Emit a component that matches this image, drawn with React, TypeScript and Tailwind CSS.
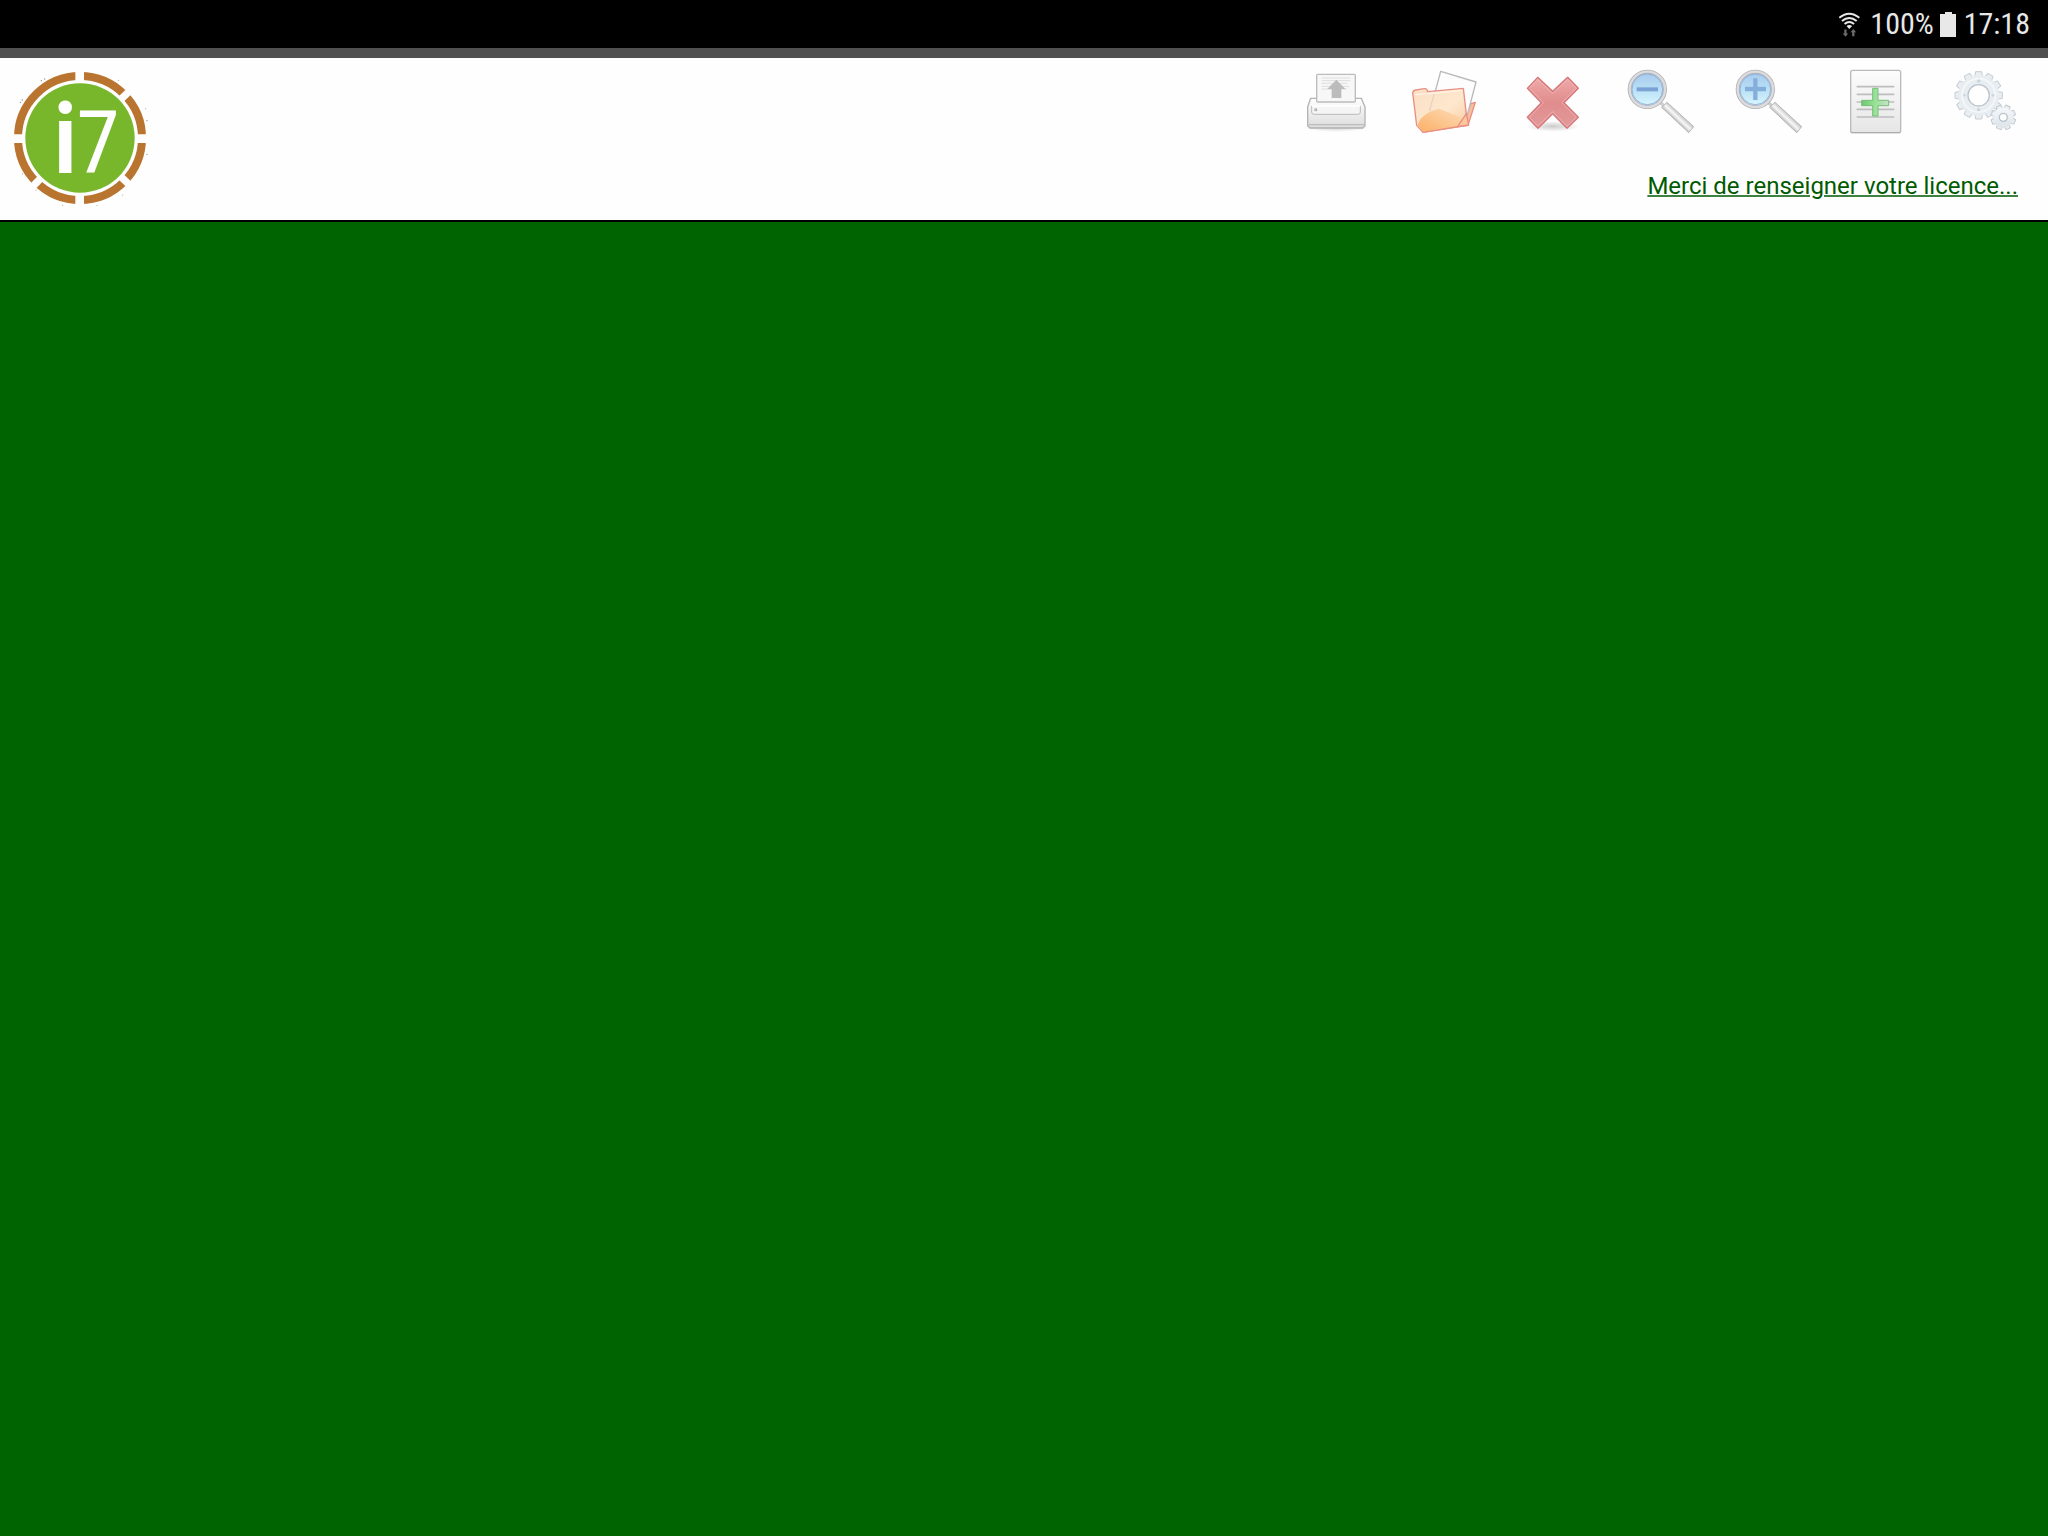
import type { ReactNode } from "react";

const MAIN_TEETH = 12;
const SMALL_TEETH = 8;

function ToolIcon({ viewBox, children }: { viewBox: string; children: ReactNode }) {
  return (
    <svg viewBox={viewBox} className="block h-[68px] w-[68px]" aria-hidden="true">
      {children}
    </svg>
  );
}

function Logo() {
  return (
    <svg viewBox="36 90 408 408" className="block h-[136px] w-[136px] shrink-0" role="img" aria-label="i7">
      <circle cx="240" cy="294" r="186" fill="none" stroke="#b97430" strokeWidth="24" />
      <g stroke="#fefefe" strokeWidth="26">
        <path d="M239 90V498" />
        <path d="M36 296H444" />
        <path d="M240 294L394 148" strokeWidth="22" />
        <path d="M240 294L394 440" strokeWidth="22" />
        <path d="M240 294L92 446" strokeWidth="22" />
      </g>
      {/* the upper left quarter has no gap */}
      <circle cx="240" cy="294" r="164" fill="#78b72b" />
      <g fill="#fefefe" fontFamily="Roboto Condensed, Roboto, sans-serif">
        <text x="160" y="398" fontWeight="600" fontSize="292">
          i
        </text>
        <text x="229" y="398" fontWeight="400" fontSize="264">
          7
        </text>
      </g>
      <g fill="#8a8f86">
        <circle cx="134" cy="117" r="2" />
        <circle cx="124" cy="122" r="2" />
        <circle cx="67" cy="180" r="2" />
        <circle cx="61" cy="187" r="2" />
        <circle cx="356" cy="121" r="1.5" />
        <circle cx="437" cy="206" r="1.5" />
        <circle cx="441" cy="242" r="2" />
        <circle cx="441" cy="343" r="2" />
        <circle cx="68" cy="401" r="1.5" />
        <circle cx="108" cy="450" r="1.5" />
        <circle cx="368" cy="465" r="1.5" />
        <circle cx="291" cy="496" r="1.5" />
        <circle cx="188" cy="496" r="1.5" />
      </g>
    </svg>
  );
}

function PrintIcon() {
  return (
    <ToolIcon viewBox="36 36 204 204">
      <defs>
        <linearGradient id="printBody" x1="0" y1="0" x2="0" y2="1">
          <stop offset="0" stopColor="#ffffff" />
          <stop offset="1" stopColor="#dcdcdc" />
        </linearGradient>
        <radialGradient id="softShadow">
          <stop offset="0" stopColor="#000" stopOpacity="0.2" />
          <stop offset="1" stopColor="#000" stopOpacity="0" />
        </radialGradient>
      </defs>
      <ellipse cx="139" cy="213" rx="100" ry="15" fill="url(#softShadow)" />
      <path d="M62 127H214L225 153V209L218 216H60L53 209V153Z" fill="url(#printBody)" stroke="#b3b3b3" strokeWidth="4" strokeLinejoin="round" />
      <path d="M56 206H222" stroke="#bdbdbd" strokeWidth="4" />
      <rect x="80" y="55" width="116" height="83" rx="3" fill="#f7f7f7" stroke="#bcbcbc" strokeWidth="4" />
      <path d="M95 66H181M95 74H181M95 82H172M95 91H178M95 99H170" stroke="#dedede" strokeWidth="3" />
      <path d="M139 71L166 99H154V126H125V99H112Z" fill="#bcbcbc" />
      <path d="M65 150V168Q65 175 72 175H204Q211 175 211 168V150" fill="#f5f5f5" stroke="#bababa" strokeWidth="3" />
      <path d="M66 150H210" stroke="#fff" strokeWidth="4" />
      <circle cx="77" cy="161" r="5" fill="#b0b0b0" />
      <circle cx="75" cy="159" r="2.5" fill="#e8e8e8" />
    </ToolIcon>
  );
}

function FolderIcon() {
  return (
    <ToolIcon viewBox="45 36 204 204">
      <defs>
        <linearGradient id="folderFront" x1="0" y1="0" x2="1" y2="1">
          <stop offset="0" stopColor="#fbdcc0" />
          <stop offset="0.55" stopColor="#fde6ca" />
          <stop offset="1" stopColor="#f9c69b" />
        </linearGradient>
        <linearGradient id="folderGlow" x1="0" y1="1" x2="1" y2="0">
          <stop offset="0" stopColor="#fbb066" />
          <stop offset="1" stopColor="#fddcb8" />
        </linearGradient>
      </defs>
      <path d="M188 204L228 143L241 139L219 208L84 229Z" fill="#f8bd9a" stroke="#e98f80" strokeWidth="4" strokeLinejoin="round" />
      <path d="M137 46L243 78L211 200L105 165Z" fill="#fdfdfd" stroke="#b9b9bd" strokeWidth="4" strokeLinejoin="round" />
      <path d="M53 109L60 103L93 98L100 109L205 97L215 175L188 212L84 229L65 208Z" fill="url(#folderFront)" fillOpacity="0.94" />
      <path d="M76 190Q96 166 132 158L190 181L204 186L188 212L84 227L68 207Z" fill="url(#folderGlow)" />
      <path d="M118 112L103 165" stroke="#e5d0c0" strokeWidth="3" />
      <path d="M58 116L97 114L202 102" fill="none" stroke="#fff1e3" strokeWidth="4" />
      <path d="M205 97L214 175M188 212L84 229L65 208L53 109Q56 103 62 102L88 98Q96 97 98 107L205 97" fill="none" stroke="#e98f80" strokeWidth="4" strokeLinejoin="round" />
      <path d="M214 173L188 212L221 207Z" fill="#fbc89c" stroke="#e98f80" strokeWidth="4" strokeLinejoin="round" />
    </ToolIcon>
  );
}

function DeleteIcon() {
  return (
    <ToolIcon viewBox="39 36 204 204">
      <defs>
        <linearGradient id="crossFill" x1="0" y1="0" x2="0" y2="1">
          <stop offset="0" stopColor="#eeaaa9" />
          <stop offset="0.5" stopColor="#e08c8c" />
          <stop offset="1" stopColor="#e29a9b" />
        </linearGradient>
      </defs>
      <ellipse cx="143" cy="211" rx="80" ry="16" fill="url(#softShadow)" />
      <path
        d="M98 64L143 106L188 64L220 97L177 140L220 184L186 217L143 173L99 217L67 184L109 140L67 97Z"
        fill="url(#crossFill)"
        stroke="#d67779"
        strokeWidth="4"
        strokeLinejoin="round"
      />
      <path
        d="M98 70L143 113L188 70L214 97L171 140L214 184L186 211L143 167L99 211L73 184L115 140L73 97Z"
        fill="none"
        stroke="#f1b8b6"
        strokeWidth="3"
        opacity="0.8"
      />
    </ToolIcon>
  );
}

// The two magnifiers share the same glass and handle.
function ZoomIcon({ id, children }: { id: string; children: ReactNode }) {
  return (
    <ToolIcon viewBox="48 36 204 204">
      <defs>
        <linearGradient id={`${id}Lens`} x1="0" y1="0" x2="0" y2="1">
          <stop offset="0" stopColor="#a6c8ec" />
          <stop offset="0.5" stopColor="#b9e0f6" />
          <stop offset="1" stopColor="#dbf8fd" />
        </linearGradient>
        <linearGradient id={`${id}Handle`} x1="0" y1="1" x2="1" y2="0">
          <stop offset="0.4" stopColor="#b4b4b4" />
          <stop offset="0.5" stopColor="#f5f5f5" />
          <stop offset="0.62" stopColor="#bcbcbc" />
        </linearGradient>
      </defs>
      <path d="M148 137L166 153" stroke="#cfcfcf" strokeWidth="10" />
      <path d="M155 154L171 139L251 212L236 230Z" fill={`url(#${id}Handle)`} stroke="#b5b5b5" strokeWidth="3" strokeLinejoin="round" />
      <path d="M166 149L241 219" stroke="#f3f3f3" strokeWidth="5" />
      <circle cx="112" cy="100" r="53" fill={`url(#${id}Lens)`} stroke="#b2b2b6" strokeWidth="12" />
      <circle cx="112" cy="100" r="53" fill="none" stroke="#dcdcdf" strokeWidth="7" />
      <circle cx="112" cy="100" r="46" fill="none" stroke="#93b3db" strokeWidth="3" />
      {children}
    </ToolIcon>
  );
}

function AddPageIcon() {
  return (
    <ToolIcon viewBox="38 36 204 204">
      <defs>
        <linearGradient id="pageFill" x1="0" y1="0" x2="0" y2="1">
          <stop offset="0" stopColor="#fcfcfc" />
          <stop offset="1" stopColor="#e6e6e6" />
        </linearGradient>
        <linearGradient id="plusFill">
          <stop offset="0" stopColor="#6bc96d" />
          <stop offset="0.5" stopColor="#98e297" />
          <stop offset="1" stopColor="#c6e3c6" />
        </linearGradient>
      </defs>
      <rect x="64" y="43" width="150" height="187" rx="6" fill="url(#pageFill)" stroke="#bababa" strokeWidth="4" />
      <path d="M66 230H212" stroke="#a9a9a9" strokeWidth="3" />
      <path d="M82 92H195M82 115H195M82 138H195M82 160H195M82 183H195" stroke="#bdbdbd" strokeWidth="5" />
      <path d="M130 97H146V133H178V149H146V180H130V149H97V133H130Z" fill="url(#plusFill)" stroke="#78bd7a" strokeWidth="3" />
    </ToolIcon>
  );
}

function SettingsIcon() {
  return (
    <ToolIcon viewBox="45 36 204 204">
      <defs>
        <linearGradient id="gearFill" x1="0" y1="0" x2="0" y2="1">
          <stop offset="0" stopColor="#f3f6f9" />
          <stop offset="1" stopColor="#dfe6ec" />
        </linearGradient>
      </defs>
      <g transform="translate(131 118)">
        <g fill="#e9eef2" stroke="#c5ccd4" strokeWidth="3" strokeLinejoin="round">
          {Array.from({ length: MAIN_TEETH }, (_, i) => (
            <path key={i} d="M-12 -54L-9 -71H9L12 -54Z" transform={`rotate(${i * (360 / MAIN_TEETH)})`} />
          ))}
        </g>
        <circle r="46" fill="none" stroke="#e8edf1" strokeWidth="30" />
        <circle r="50" fill="none" stroke="#f4f7f9" strokeWidth="6" />
        <circle r="32" fill="#fefefe" stroke="#bcc5cf" strokeWidth="4" />
        <g fill="#ccd4dc">
          <circle cy="-43" r="5" />
          <circle cy="43" r="5" />
          <circle cx="-43" r="4" />
          <circle cx="43" r="4" />
        </g>
      </g>
      <g transform="translate(205 184)">
        <g fill="#e9eef2" stroke="#c2c9d0" strokeWidth="3" strokeLinejoin="round">
          {Array.from({ length: SMALL_TEETH }, (_, i) => (
            <path key={i} d="M-9 -26L-7 -37H7L9 -26Z" transform={`rotate(${22 + i * (360 / SMALL_TEETH)})`} />
          ))}
        </g>
        <circle r="21" fill="none" stroke="url(#gearFill)" strokeWidth="19" />
        <circle r="12" fill="#fefefe" stroke="#bac3cc" strokeWidth="4" />
      </g>
    </ToolIcon>
  );
}

const tools = [
  { label: "Imprimer", icon: <PrintIcon /> },
  { label: "Ouvrir", icon: <FolderIcon /> },
  { label: "Supprimer", icon: <DeleteIcon /> },
  {
    label: "Zoom arrière",
    icon: (
      <ZoomIcon id="zoomOut">
        <path d="M80 100H144" stroke="#7ba2d4" strokeWidth="12" />
      </ZoomIcon>
    ),
  },
  {
    label: "Zoom avant",
    icon: (
      <ZoomIcon id="zoomIn">
        <path d="M81 99H144M112 67V132" stroke="#86aedb" strokeWidth="13" />
      </ZoomIcon>
    ),
  },
  { label: "Ajouter une page", icon: <AddPageIcon /> },
  { label: "Paramètres", icon: <SettingsIcon /> },
];

function StatusBar() {
  return (
    <div className="flex h-12 items-center justify-end bg-black pr-[18px] font-['Roboto_Condensed',Roboto,sans-serif] text-[30px] leading-[48px] text-[#e8e8e8]">
      <svg viewBox="54 33 64 75" className="mr-2.5 h-[25px] w-[21px]" aria-hidden="true">
        <g fill="none" stroke="#e8e8e8" strokeWidth="6">
          <path d="M55 50Q85 25 116 50" />
          <path d="M63 60Q85 41 108 60" />
          <path d="M71 69Q85 57 100 69" />
        </g>
        <path d="M77 75Q85 69 94 75L85 84Z" fill="#e8e8e8" />
        <path d="M70 86H77V98H82L74 108L65 98H70ZM94 106H101V94H106L98 84L89 94H94Z" fill="#6a6a6a" />
      </svg>
      <span>100%</span>
      <svg viewBox="0 0 16 25" className="mr-2 ml-1.5 h-[25px] w-4" aria-hidden="true">
        <path d="M5 0H12V2H16V25H0V2H5Z" fill="#e8e8e8" />
      </svg>
      <span>17:18</span>
    </div>
  );
}

export default function App() {
  return (
    <div className="flex min-h-screen flex-col bg-[#006400]">
      <StatusBar />
      <div className="h-[10px] bg-[#505050]" />

      <header className="flex items-start justify-between border-b-2 border-black bg-[#fefefe] pr-[30px] pl-3">
        <div className="pt-3 pb-[14px]">
          <Logo />
        </div>
        <div className="flex flex-col items-end pt-[10px]">
          <nav className="flex gap-10">
            {tools.map((tool) => (
              <button key={tool.label} type="button" aria-label={tool.label} className="cursor-pointer">
                {tool.icon}
              </button>
            ))}
          </nav>
          <a
            href="#licence"
            className="mt-9 font-[Roboto,sans-serif] text-2xl leading-7 text-[#005a00] underline decoration-[#3f823f] decoration-2 underline-offset-1"
          >
            Merci de renseigner votre licence...
          </a>
        </div>
      </header>

      <main className="flex-1" />
    </div>
  );
}
